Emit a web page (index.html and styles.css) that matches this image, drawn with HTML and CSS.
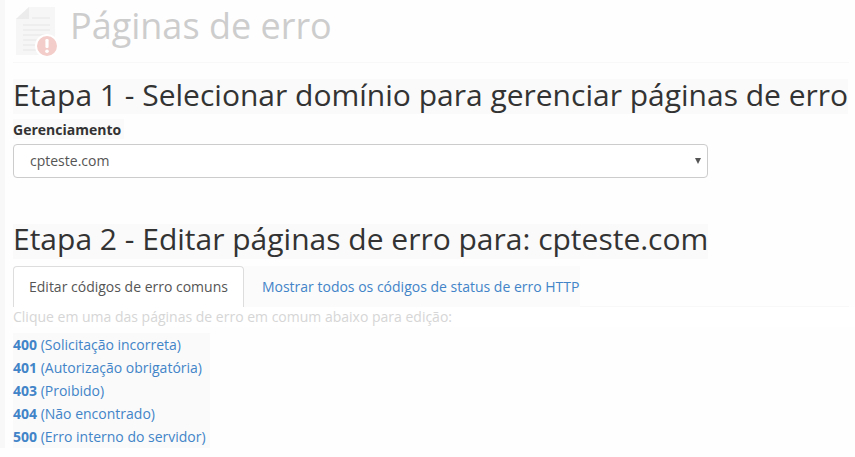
FILE: index.html
```html
<!DOCTYPE html>
<html lang="pt">
<head>
<meta charset="utf-8">
<title>Páginas de erro</title>
<link rel="stylesheet" href="styles.css">
</head>
<body>
<div class="page">
  <header class="page-header">
    <svg class="page-icon" width="42" height="50" viewBox="0 0 42 50" aria-hidden="true">
      <path d="M1 13 L14 1 H40 V49 H1 Z" fill="#f6f6f6"/>
      <path d="M1 13 L14 1 V13 Z" fill="#ececec"/>
      <g stroke="#ececec" stroke-width="1.5">
        <path d="M17 12H35M8 19H35M8 24H35M8 29H35M8 34H28M8 39H24M8 44H24"/>
      </g>
      <circle cx="32" cy="40" r="12" fill="#fff"/>
      <circle cx="32" cy="40" r="10" fill="#f3cdc9"/>
      <rect x="30.4" y="33" width="3.2" height="9" rx="1.2" fill="#fff"/>
      <circle cx="32" cy="45.2" r="1.8" fill="#fff"/>
    </svg>
    <h1 class="page-title">Páginas de erro</h1>
  </header>

  <section class="step-one">
    <h2 class="step-title">Etapa 1 - Selecionar domínio para gerenciar páginas de erro</h2>
    <label class="field-label" for="domain">Gerenciamento</label>
    <div class="select-box" id="domain">
      <span>cpteste.com</span>
      <span class="caret"></span>
    </div>
  </section>

  <section class="step-two">
    <h2 class="step-title">Etapa 2 - Editar páginas de erro para: cpteste.com</h2>
    <nav class="tabs">
      <a class="tab active">Editar códigos de erro comuns</a>
      <a class="tab">Mostrar todos os códigos de status de erro HTTP</a>
    </nav>
    <p class="hint">Clique em uma das páginas de erro em comum abaixo para edição:</p>
    <ul class="codes">
      <li><a><b>400</b> (Solicitação incorreta)</a></li>
      <li><a><b>401</b> (Autorização obrigatória)</a></li>
      <li><a><b>403</b> (Proibido)</a></li>
      <li><a><b>404</b> (Não encontrado)</a></li>
      <li><a><b>500</b> (Erro interno do servidor)</a></li>
    </ul>
  </section>
</div>
</body>
</html>
```
FILE: styles.css
```css
* { box-sizing: border-box; }
html, body { margin: 0; height: 100%; overflow: hidden; }
body {
  background: #fefefe;
  font-family: "Open Sans", sans-serif;
  font-size: 14px;
  line-height: 20px;
  color: #333;
}
.page {
  height: 448px;
  border-left: 5px solid #f8f8f8;
  padding-left: 8px;
}
.page-header {
  display: flex;
  align-items: flex-start;
  height: 63px;
  padding-top: 3px;
  border-bottom: 1px solid #f8f8f8;
  margin-bottom: 16px;
  margin-right: 6px;
}
.page-icon { margin: 3px 13px 0 2px; flex: none; }
.page-title {
  margin: 0;
  font-size: 36px;
  line-height: 46px;
  font-weight: 400;
  color: #cdcdcd;
}
.step-title {
  margin: 0;
  width: fit-content;
  font-size: 30px;
  line-height: 31px;
  padding-bottom: 4px;
  font-weight: 400;
  color: #333;
  background: #fafafa;
}
.step-two .step-title { line-height: 29px; padding-bottom: 6px; }
.field-label {
  display: block;
  width: fit-content;
  margin-top: 5px;
  height: 20px;
  padding: 1px 3px 0 0;
  font-weight: 700;
  font-size: 14px;
  line-height: 19px;
  background: #fafafa;
}
.select-box {
  display: flex;
  align-items: center;
  justify-content: space-between;
  width: 695px;
  height: 34px;
  margin-top: 5px;
  padding: 0 6px 0 16px;
  background: #fff;
  border: 1px solid #ccc;
  border-radius: 4px;
  color: #555;
}
.caret {
  width: 0;
  height: 0;
  border-left: 3px solid transparent;
  border-right: 3px solid transparent;
  border-top: 6px solid #555;
}
.step-two { margin-top: 46px; }
.tabs {
  display: flex;
  height: 41px;
  margin-top: 7px;
  border-bottom: 1px solid #f8f8f8;
  margin-right: 6px;
}
.tab {
  display: block;
  padding: 10px 15px;
  height: 41px;
  font-size: 14px;
  color: #4284c8;
  white-space: nowrap;
}
.tab.active {
  color: #555;
  background: #fff;
  border: 1px solid #ddd;
  border-bottom: 0;
  border-radius: 4px 4px 0 0;
}
.tab + .tab { padding: 11px 1px 9px 18px; background: #fbfbfb; }
.hint {
  margin: 0;
  height: 20px;
  line-height: 20px;
  color: #d6d6d6;
  background: #fff;
}
.codes {
  list-style: none;
  margin: 9px 0 0;
  padding: 0 4px 0 0;
  width: fit-content;
  background: #fafafa;
  line-height: 23px;
}
.codes li:first-child { margin-top: -3px; }
.codes a { color: #4284c8; }
```
